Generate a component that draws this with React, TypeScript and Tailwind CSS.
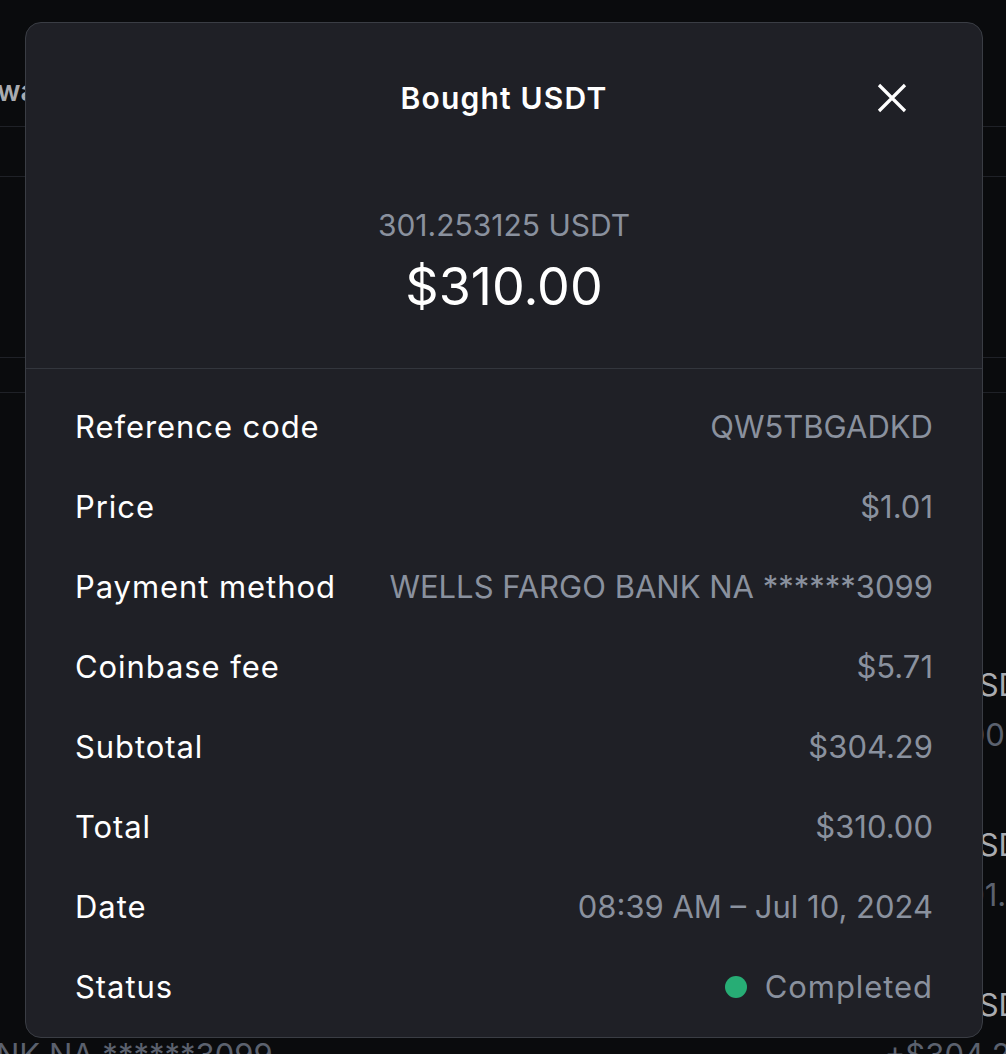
const ROWS: { label: string; value: string }[] = [
  { label: "Reference code", value: "QW5TBGADKD" },
  { label: "Price", value: "$1.01" },
  { label: "Payment method", value: "WELLS FARGO BANK NA ******3099" },
  { label: "Coinbase fee", value: "$5.71" },
  { label: "Subtotal", value: "$304.29" },
  { label: "Total", value: "$310.00" },
  { label: "Date", value: "08:39 AM \u2013 Jul 10, 2024" },
];

const BG_ROWS = [
  { right: "USDT", sub: "+$300.51" },
  { right: "USDT", sub: "+$301.25" },
  { right: "USDT", sub: "+$304.29" },
];

function DetailRow({ label, children }: { label: string; children: React.ReactNode }) {
  return (
    <div className="flex h-[80px] items-center justify-between">
      <span className="tracking-[0.03em] text-white">{label}</span>
      <span className="flex items-center text-[#8a919e]">{children}</span>
    </div>
  );
}

export default function App() {
  return (
    <div className="relative h-[1054px] w-[1006px] overflow-hidden bg-[#0a0b0d] font-['Inter',sans-serif]">
      {/* page underneath the modal */}
      <div className="flex flex-col text-[#5b616e]">
        <div className="flex h-[127px] items-end border-b border-[#1f2127] pb-[14px]">
          <span className="-ml-[3px] text-[28px] font-semibold text-[#a9abb0]">wa</span>
        </div>
        <div className="h-[50px] border-b border-[#1f2127]" />
        <div className="h-[181px] border-b border-[#1f2127]" />
        <div className="h-[35px] border-b border-[#1f2127]" />
        <div className="h-[212px]" />
        {BG_ROWS.map((r, i) => (
          <div key={i} className="flex h-[160px] flex-col">
            <div className="mt-[62px] flex h-[36px] items-center justify-end whitespace-nowrap text-[31px]">
              <span className="-mr-[34px] text-[#a9abb0]">{r.right}</span>
            </div>
            <div className="mt-[14px] flex h-[36px] items-center justify-between whitespace-nowrap text-[31px]">
              <span className="-ml-[4px]">{i === 2 ? "NK NA ******3099" : ""}</span>
              <span className={i === 2 ? "-mr-[24px]" : "-mr-[38px]"}>{r.sub}</span>
            </div>
          </div>
        ))}
      </div>

      {/* modal */}
      <div className="absolute left-[25px] top-[22px] flex h-[1016px] w-[958px] flex-col rounded-[16px] border border-[#3a3d44] bg-[#1f2026]">
        <div className="relative flex h-[150px] items-start justify-center pt-[56px]">
          <h2 className="text-[30px] font-semibold leading-[38px] tracking-[0.04em] text-white">Bought USDT</h2>
          <button type="button" className="absolute right-[75px] top-[60px] text-white">
            <svg width="30" height="30" viewBox="0 0 30 30" fill="none" stroke="currentColor" strokeWidth="3.2">
              <path d="M2 2L28 28M28 2L2 28" />
            </svg>
          </button>
        </div>
        <div className="flex h-[196px] flex-col items-center border-b border-[#33363d]">
          <span className="mt-[34px] text-[30px] leading-[36px] text-[#8a919e]">301.253125 USDT</span>
          <span className="mt-[13px] text-[52px] leading-[62px] text-white">$310.00</span>
        </div>
        <div className="flex flex-col px-[49px] pt-[18px] text-[31px]">
          {ROWS.map((r) => (
            <DetailRow key={r.label} label={r.label}>
              {r.value}
            </DetailRow>
          ))}
          <DetailRow label="Status">
            <span className="mr-[18px] h-[22px] w-[22px] rounded-full bg-[#27ad75]" />
            <span className="tracking-[0.03em]">Completed</span>
          </DetailRow>
        </div>
      </div>
    </div>
  );
}
